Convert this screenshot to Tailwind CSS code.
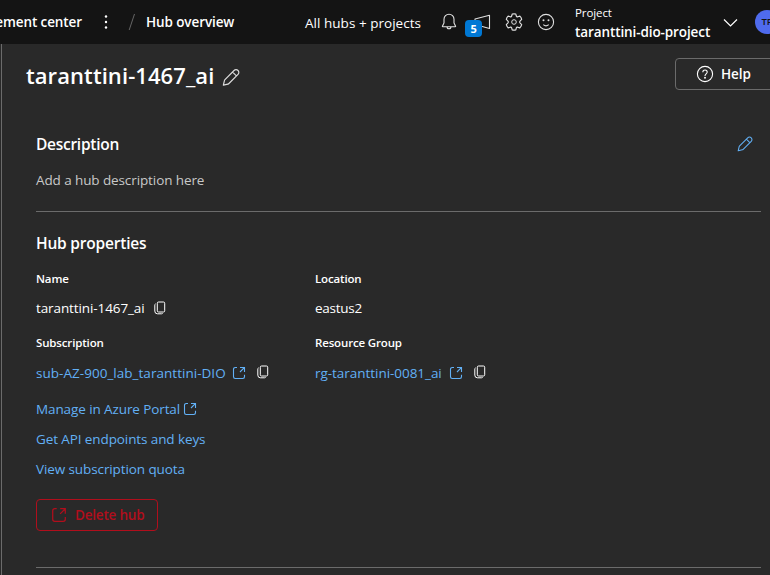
<!DOCTYPE html>
<html lang="en">
<head>
<meta charset="utf-8">
<title>Hub overview</title>
<script src="https://cdn.jsdelivr.net/npm/@tailwindcss/browser@4"></script>
</head>
<body class="w-[770px] h-[575px] overflow-hidden bg-[#292929] text-white text-[13.5px] leading-5 tracking-[-0.1px] font-['Open_Sans','Noto_Sans',sans-serif] whitespace-nowrap">
<svg class="hidden">
  <defs>
    <symbol id="pencil" viewBox="0 0 20 20"><path d="M17.800 2.200a3.100 3.100 0 0 0-4.400 0L3.300 12.300c-.3.300-.5.700-.6 1.100L1.500 18.500l5.100-1.200c.4-.1.800-.3 1.100-.6L17.800 6.600a3.100 3.100 0 0 0 0-4.400ZM11.800 4 16 8.200" fill="none" stroke="currentColor" stroke-width="1.300" stroke-linejoin="round"/></symbol>
    <symbol id="copy" viewBox="0 0 12 14"><path d="M4.500 1h5a1.200 1.200 0 0 1 1.200 1.200v7.600A1.200 1.200 0 0 1 9.500 11h-5a1.200 1.200 0 0 1-1.200-1.200V2.200A1.200 1.200 0 0 1 4.500 1ZM1.500 2.800c-.5.300-.7.700-.7 1.300v6a2.700 2.700 0 0 0 2.700 2.700h4c.6 0 1-.2 1.300-.6" fill="none" stroke="currentColor" stroke-width="1"/></symbol>
    <symbol id="open" viewBox="0 0 14 14"><path d="M5 1.500H3.200A1.700 1.700 0 0 0 1.500 3.200v7.600a1.700 1.700 0 0 0 1.700 1.700h7.600a1.700 1.700 0 0 0 1.700-1.700V8.800M8 1.500h4.500V6M12.300 1.700 8 6" fill="none" stroke="currentColor" stroke-width="1.100"/></symbol>
  </defs>
</svg>
<header class="flex h-11 bg-[#141414]">
  <div class="w-[82px] h-11 flex items-center justify-end font-semibold shrink-0">ement center</div>
  <svg class="ml-[22px] mt-[15px] w-1 h-4 shrink-0" viewBox="0 0 4 16" fill="#fff"><circle cx="2" cy="1.500" r="1.200"/><circle cx="2" cy="7" r="1.200"/><circle cx="2" cy="12.500" r="1.200"/></svg>
  <svg class="ml-[20px] mt-[14px] w-2 h-4 shrink-0" viewBox="0 0 8 16" stroke="#666" fill="none"><path d="M6.500 0 1.200 16"/></svg>
  <div class="ml-[10px] w-[159px] flex items-center font-semibold shrink-0">Hub overview</div>
  <div class="w-[135px] pt-px flex items-center tracking-[0.03px] shrink-0">All hubs + projects</div>
  <svg class="mt-[13px] w-[18px] h-[18px] shrink-0" viewBox="0 0 18 18" fill="none" stroke="#e0e0e0" stroke-width="1.100"><path d="M9 1.200a5 5 0 0 0-5 5v3.700l-1.600 3.300c-.1.300 0 .5.300.5h12.600c.3 0 .4-.2.300-.5L14 9.900V6.200a5 5 0 0 0-5-5ZM7 13.800a2 2 0 0 0 4 0"/></svg>
  <div class="relative ml-[7px] mt-[13px] w-[28px] h-6 shrink-0">
    <svg class="absolute left-[8px] top-0 w-[19px] h-[18px]" viewBox="0 0 19 18" fill="none" stroke="#e0e0e0" stroke-width="1.100"><path d="M2 6 16.500 2.300v13.200L2 11.500Z" stroke-linejoin="round"/></svg>
    <span class="absolute left-0 top-[7px] w-[17px] h-[17px] rounded bg-[#0078d4] text-[11px] leading-[17px] text-center font-bold">5</span>
  </div>
  <svg class="ml-[12px] mt-[13px] w-[18px] h-[18px] shrink-0" viewBox="0 0 18 18" fill="none" stroke="#e0e0e0" stroke-width="1" stroke-linejoin="round"><path d="M7.400 1.100Q9 .7 10.600 1.100l.4 1.700q.3.900 1.300.7l1.800-.6q1.200 1.200 1.600 2.800L14.400 7q-.9 1 0 2l1.300 1.300q-.4 1.600-1.600 2.800l-1.800-.6q-1-.2-1.300.7l-.4 1.700q-1.600.4-3.200 0L7 13.200q-.3-.9-1.300-.7l-1.800.6q-1.200-1.200-1.600-2.800L3.600 9q.9-1 0-2L2.300 5.700Q2.700 4.100 3.900 2.900l1.800.6q1 .2 1.300-.7Z" transform="translate(9 9) scale(1.150) translate(-9 -8)"/><circle cx="9" cy="9" r="2.300"/></svg>
  <svg class="ml-[14px] mt-[13px] w-[18px] h-[18px] shrink-0" viewBox="0 0 18 18" fill="none" stroke="#e0e0e0" stroke-width="1.100"><circle cx="9" cy="9" r="7.600"/><path d="M6.300 11.600c1.500 1.400 3.900 1.400 5.400 0"/><g fill="#e0e0e0" stroke="none"><circle cx="6.500" cy="7.300" r="1"/><circle cx="11.500" cy="7.300" r="1"/></g></svg>
  <div class="ml-[20px] w-[148px] pt-[3px] shrink-0"><div class="text-[11.500px] leading-5">Project</div><div class="leading-[19px] font-semibold">taranttini-dio-project</div></div>
  <svg class="mt-[18px] w-[15px] h-[10px] shrink-0" viewBox="0 0 15 10" fill="none" stroke="#fff" stroke-width="1.200"><path d="m1 1.500 6.500 6.500L14 1.500"/></svg>
  <div class="ml-[17px] mt-[10px] w-6 h-6 rounded-full bg-[#4f6bed] text-[#111] text-[9.500px] leading-6 text-center font-semibold shrink-0">TP</div>
</header>
<main class="ml-px h-[531px] border-l border-[#6b6b6b]">
  <div class="flex items-center pt-[14px] pl-6 h-[46px]">
    <h1 class="w-[196px] pt-px text-[22px] leading-8 tracking-[0.08px] font-semibold shrink-0">taranttini-1467_ai</h1>
    <svg class="mt-[7px] w-[18px] h-[19px] shrink-0 text-[#ddd]"><use href="#pencil"/></svg>
    <button class="ml-[435px] w-[110px] h-8 shrink-0 flex items-center rounded border border-[#6b6b6b] pl-5 font-semibold">
      <svg class="w-[18px] h-[18px] mr-[7px]" viewBox="0 0 18 18" fill="none" stroke="#fff" stroke-width="1.100"><circle cx="9" cy="9" r="7.600"/><path d="M6.800 7.200C6.800 4.200 11.200 4.300 11.200 7.100c0 1.700-2.200 1.900-2.200 3.800"/><circle cx="9" cy="12.800" r=".4" fill="#fff"/></svg>
      Help
    </button>
  </div>
  <section class="ml-[34px] w-[725px]">
    <div class="flex items-center justify-between pt-[38px] h-[70px]"><h2 class="text-[15.500px] tracking-[-0.27px] font-semibold">Description</h2><svg class="w-4 h-4 mr-2 text-[#62b0f5]"><use href="#pencil"/></svg></div>
    <p class="mt-[10px] text-[#c8c8c8]">Add a hub description here</p>
    <hr class="mt-[21px] border-[#6b6b6b]">
    <h2 class="mt-[21px] text-[15.500px] tracking-[-0.2px] font-semibold">Hub properties</h2>
    <div class="mt-4 grid grid-cols-[279px_1fr] text-[11.500px] tracking-[-0.15px] font-semibold"><div>Name</div><div>Location</div></div>
    <div class="mt-[9px] grid grid-cols-[279px_1fr]">
      <div class="flex items-center"><div class="w-[118px]">taranttini-1467_ai</div><svg class="w-3 h-[14px]"><use href="#copy"/></svg></div>
      <div class="tracking-[-0.25px]">eastus2</div>
    </div>
    <div class="mt-[15px] grid grid-cols-[279px_1fr] text-[11.500px] tracking-[-0.15px] font-semibold"><div>Subscription</div><div>Resource Group</div></div>
    <div class="mt-[10px] grid grid-cols-[279px_1fr]">
      <div class="flex items-center"><a class="w-[196px] tracking-[0.03px] text-[#62b0f5]">sub-AZ-900_lab_taranttini-DIO</a><svg class="w-[14px] h-[14px] text-[#62b0f5]"><use href="#open"/></svg><svg class="ml-[11px] mb-[3px] w-3 h-[14px]"><use href="#copy"/></svg></div>
      <div class="flex items-center"><a class="w-[134px] tracking-[-0.04px] text-[#62b0f5]">rg-taranttini-0081_ai</a><svg class="w-[14px] h-[14px] text-[#62b0f5]"><use href="#open"/></svg><svg class="ml-[11px] mb-[3px] w-3 h-[14px]"><use href="#copy"/></svg></div>
    </div>
    <div class="mt-4 flex flex-col gap-[10px] text-[#62b0f5]">
      <div class="flex items-center"><a class="w-[147px]">Manage in Azure Portal</a><svg class="w-[14px] h-[14px]"><use href="#open"/></svg></div>
      <a>Get API endpoints and keys</a>
      <a>View subscription quota</a>
    </div>
    <button class="mt-5 flex h-8 w-[122px] items-center rounded border border-[#b10e1c] pl-[14px] tracking-[-0.2px] font-semibold text-[#b10e1c]"><svg class="mr-[8px] w-4 h-4"><use href="#open"/></svg>Delete hub</button>
    <hr class="mt-9 border-[#6b6b6b]">
  </section>
</main>
</body>
</html>
